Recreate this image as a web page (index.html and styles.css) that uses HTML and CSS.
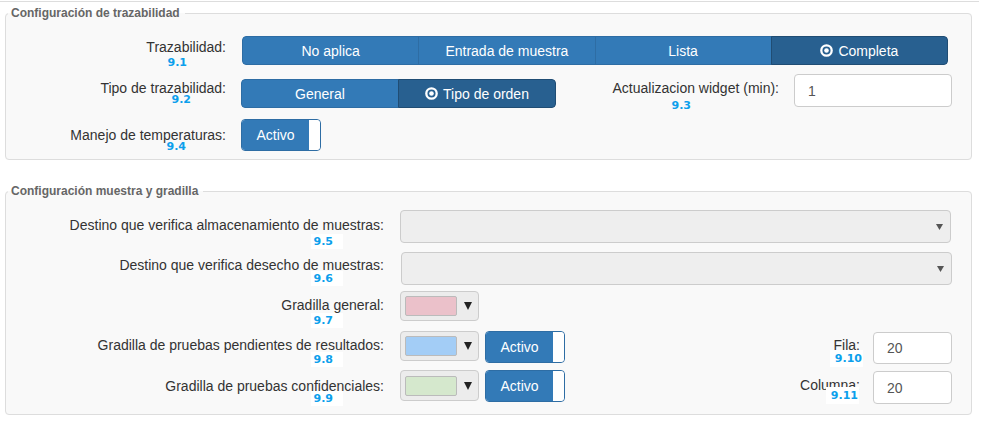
FILE: index.html
```html
<!DOCTYPE html>
<html lang="es">
<head>
<meta charset="utf-8">
<title>Configuración</title>
<link rel="stylesheet" href="styles.css">
</head>
<body>
<div class="topline"></div>
<div class="page">
  <fieldset class="fs fs1">
    <legend>Configuración de trazabilidad</legend>
    <div class="row r1">
      <div class="lab main"><span class="t">Trazabilidad:</span><span class="num">9.1</span></div>
      <div class="btngroup g1">
        <span class="btn">No aplica</span>
        <span class="btn">Entrada de muestra</span>
        <span class="btn">Lista</span>
        <span class="btn active"><svg class="ico" width="13" height="13" viewBox="0 0 13 13"><circle cx="6.5" cy="6.5" r="5.2" fill="none" stroke="#fff" stroke-width="2.3"/><circle cx="6.5" cy="6.5" r="2.3" fill="#fff"/></svg>Completa</span>
      </div>
    </div>
    <div class="row r2">
      <div class="lab main"><span class="t">Tipo de trazabilidad:</span><span class="num">9.2</span></div>
      <div class="btngroup g2">
        <span class="btn">General</span>
        <span class="btn active"><svg class="ico" width="13" height="13" viewBox="0 0 13 13"><circle cx="6.5" cy="6.5" r="5.2" fill="none" stroke="#fff" stroke-width="2.3"/><circle cx="6.5" cy="6.5" r="2.3" fill="#fff"/></svg>Tipo de orden</span>
      </div>
      <div class="lab widget"><span class="t">Actualizacion widget (min):</span><span class="num">9.3</span></div>
      <div class="input in-widget">1</div>
    </div>
    <div class="row r3">
      <div class="lab main"><span class="t">Manejo de temperaturas:</span><span class="num">9.4</span></div>
      <div class="toggle tg1"><span class="tg-on">Activo</span><span class="tg-h"></span></div>
    </div>
  </fieldset>

  <fieldset class="fs fs2">
    <legend>Configuración muestra y gradilla</legend>
    <div class="row rA">
      <div class="lab wide"><span class="t">Destino que verifica almacenamiento de muestras:</span><span class="num"><span class="chip">9.5</span></span></div>
      <div class="select selA"><svg width="7" height="6" viewBox="0 0 7 6"><path d="M0 0H7L3.5 6Z" fill="#555"/></svg></div>
    </div>
    <div class="row rB">
      <div class="lab wide"><span class="t">Destino que verifica desecho de muestras:</span><span class="num"><span class="chip">9.6</span></span></div>
      <div class="select selB"><svg width="7" height="6" viewBox="0 0 7 6"><path d="M0 0H7L3.5 6Z" fill="#555"/></svg></div>
    </div>
    <div class="row rC">
      <div class="lab wide"><span class="t">Gradilla general:</span><span class="num"><span class="chip">9.7</span></span></div>
      <div class="picker"><span class="swatch pink"></span><svg class="parrow" width="8" height="8" viewBox="0 0 8 8"><path d="M0 0H8L4 8Z" fill="#222"/></svg></div>
    </div>
    <div class="row rD">
      <div class="lab wide"><span class="t">Gradilla de pruebas pendientes de resultados:</span><span class="num"><span class="chip">9.8</span></span></div>
      <div class="picker"><span class="swatch blue"></span><svg class="parrow" width="8" height="8" viewBox="0 0 8 8"><path d="M0 0H8L4 8Z" fill="#222"/></svg></div>
      <div class="toggle tg2"><span class="tg-on">Activo</span><span class="tg-h"></span></div>
      <div class="lab side sFila"><span class="t">Fila:</span><span class="num"><span class="chip c2">9.10</span></span></div>
      <div class="input in-side">20</div>
    </div>
    <div class="row rE">
      <div class="lab wide"><span class="t">Gradilla de pruebas confidenciales:</span><span class="num"><span class="chip">9.9</span></span></div>
      <div class="picker"><span class="swatch green"></span><svg class="parrow" width="8" height="8" viewBox="0 0 8 8"><path d="M0 0H8L4 8Z" fill="#222"/></svg></div>
      <div class="toggle tg2"><span class="tg-on">Activo</span><span class="tg-h"></span></div>
      <div class="lab side sCol"><span class="t">Columna:</span><span class="num"><span class="chip c2">9.11</span></span></div>
      <div class="input in-side">20</div>
    </div>
  </fieldset>
</div>
</body>
</html>
```
FILE: styles.css
```css
* { box-sizing: border-box; }
html, body { margin: 0; padding: 0; background: #fff; }
body {
  font-family: "Liberation Sans", Arial, sans-serif;
  font-size: 14px;
  color: #333;
  width: 989px;
  height: 428px;
  overflow: hidden;
}
.topline {
  margin-top: 1px;
  width: 979px;
  height: 0;
  border-top: 1px solid #ddd;
}
.page { padding: 0 17px 0 5px; }
.fs {
  margin: 0;
  padding: 0 0 7px 0;
  border: 1px solid #ddd;
  border-radius: 4px;
  background: #f9f9f9;
  min-width: 0;
}
.fs1 { margin-top: 4px; }
.fs2 { margin-top: 24px; padding-bottom: 10px; }
legend {
  margin-left: 2px;
  padding: 0 5px 0 3px;
  font: bold 12px/14px "Liberation Sans", Arial, sans-serif;
  color: #666;
}
.row { display: flex; align-items: flex-start; }
.lab { flex: none; text-align: right; }
.lab .t { display: block; line-height: 14px; white-space: nowrap; }
.num {
  display: block;
  font: bold 11px/10px "DejaVu Sans", Verdana, sans-serif;
  color: #0d9fec;
}
.chip { background: #fff; padding: 1px 10px 1px 3px; }
.chip.c2 { padding: 2px 1px 2px 5px; }

/* section 1 */
.lab.main { width: 220px; }
.r1 { margin-top: 16px; }
.r1 .lab { padding-top: 4px; }
.r1 .num { margin-top: 4px; padding-right: 39px; }
.r2 { margin-top: 6px; }
.r2 .lab.main { padding-top: 7px; }
.r2 .lab.main .num { margin-top: 0; padding-right: 35px; }
.lab.widget { width: 223px; padding-top: 7px; }
.lab.widget .num { margin-top: 6px; padding-right: 88px; }
.r3 { margin-top: 8px; }
.r3 .lab { padding-top: 9px; }
.r3 .num { margin-top: 0; padding-right: 40px; }

.btngroup { display: flex; height: 29px; border-radius: 4px; overflow: hidden; flex: none; }
.g1 { margin-left: 16px; width: 706px; }
.g2 { margin-left: 15px; margin-top: 5px; width: 315px; }
.btn {
  flex: 1 1 0;
  display: flex;
  align-items: center;
  justify-content: center;
  background: #337ab7;
  color: #fff;
  border: 1px solid #2e6da4;
  margin-left: -1px;
}
.btn:first-child { margin-left: 0; border-radius: 4px 0 0 4px; }
.btn:last-child { border-radius: 0 4px 4px 0; }
.btn.active { background: #286090; border-color: #204d74; }
.ico { margin-right: 5px; flex: none; }

.input {
  flex: none;
  display: flex;
  align-items: center;
  padding-left: 13px;
  background: #fff;
  border: 1px solid #ccc;
  border-radius: 4px;
  color: #555;
}
.in-widget { margin-left: 15px; width: 158px; height: 33px; }

.toggle {
  flex: none;
  display: flex;
  width: 80px;
  height: 32px;
  border: 1px solid #2e6da4;
  border-radius: 4px;
  overflow: hidden;
  background: #fff;
}
.tg-on {
  flex: 1;
  display: flex;
  align-items: center;
  justify-content: center;
  background: #337ab7;
  color: #fff;
}
.tg-h { width: 11px; background: #fff; border-radius: 0 3px 3px 0; }
.tg1 { margin-left: 15px; }

/* section 2 */
.lab.wide { width: 378px; }
.lab.wide .num { padding-right: 41px; }
.rA { margin-top: 12px; }
.rA .lab { padding-top: 8px; }
.rA .num { margin-top: 5px; }
.rB { margin-top: 5px; }
.rB .lab { padding-top: 6px; }
.rB .num { margin-top: 2px; }
.rC { margin-top: 6px; }
.rC .lab { padding-top: 7px; }
.rC .num { margin-top: 4px; }
.rD { margin-top: 5px; }
.rD .lab.wide { padding-top: 7px; }
.rD .lab.wide .num { margin-top: 3px; }
.rE { margin-top: 5px; }
.rE .lab.wide { padding-top: 9px; }
.rE .lab.wide .num { margin-top: 1px; }

.select {
  flex: none;
  display: flex;
  align-items: center;
  justify-content: flex-end;
  padding-right: 7px;
  width: 551px;
  height: 33px;
  background: #eee;
  border: 1px solid #ccc;
  border-radius: 4px;
}
.selA { margin-left: 16px; }
.selB { margin-left: 17px; }

.picker {
  flex: none;
  display: flex;
  align-items: center;
  margin-left: 16px;
  width: 79px;
  height: 30px;
  padding-left: 4px;
  background: #ececec;
  border: 1px solid #ccc;
  border-radius: 4px;
}
.rE .picker { height: 31px; }
.swatch { width: 52px; height: 20px; border: 1px solid #bbb; border-radius: 2px; }
.swatch.pink { background: #ebc1ca; }
.swatch.blue { background: #a3cdf6; }
.swatch.green { background: #d5e8cd; }
.parrow { margin-left: 7px; }
.tg2 { margin-left: 6px; }

.lab.side { width: 100px; margin-left: 198px; }
.lab.side .t { padding-right: 3px; }
.sFila { padding-top: 7px; }
.sFila .num { margin-top: 2px; }
.sCol { padding-top: 8px; }
.sCol .num { margin-top: -1px; padding-right: 4px; }
.in-side { margin-left: 10px; width: 79px; height: 32px; margin-top: 1px; }
.rE .in-side { height: 33px; }
```
